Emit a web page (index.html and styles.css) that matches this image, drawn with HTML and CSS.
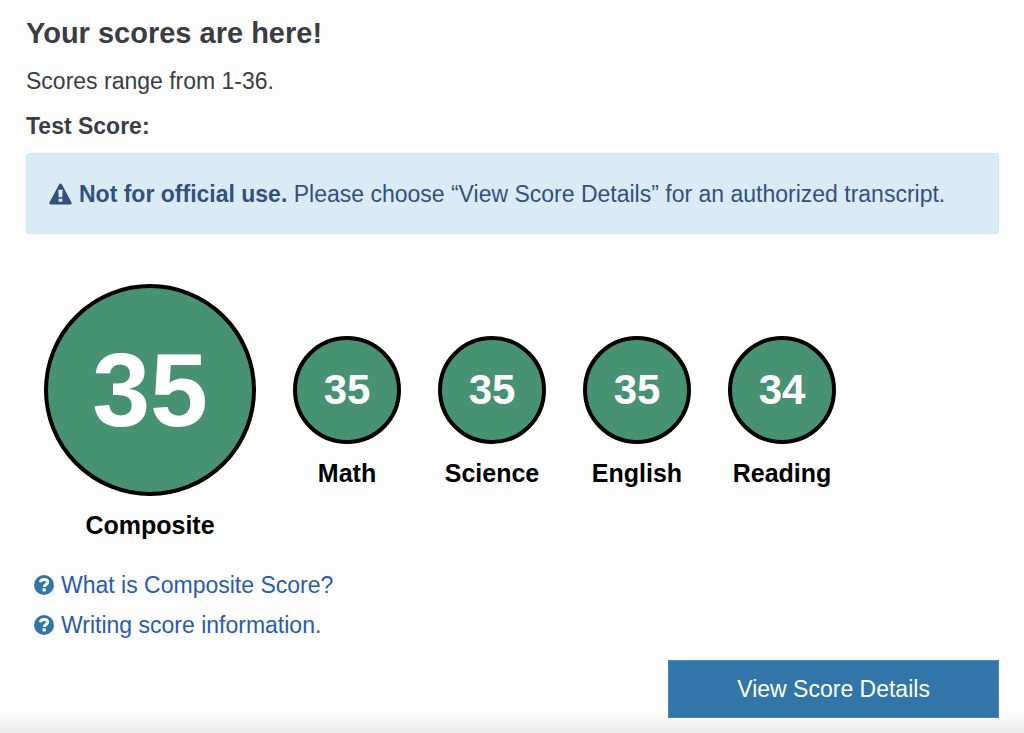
FILE: index.html
```html
<!DOCTYPE html>
<html lang="en">
<head>
    <meta charset="UTF-8">
    <meta name="viewport" content="width=device-width, initial-scale=1.0">
    <title>Your scores</title>
    <link rel="stylesheet" href="styles.css">
</head>
<body>
    <main class="container">
        <h1 class="title">Your scores are here!</h1>
        <p class="range">Scores range from 1-36.</p>
        <h2 class="subtitle">Test Score:</h2>
        <div class="alert">
            <svg class="icon-warning" viewBox="0 0 24 22" aria-hidden="true">
                <path fill="currentColor" fill-rule="evenodd" d="M12 0q1 0 1.500 1L23.700 20q.3 2-1.700 2H2Q0 22 .3 20L10.500 1Q11 0 12 0ZM9.700 6.500l.5 8h3.600l.5-8ZM10 16v3.200h4V16Z"/>
            </svg>
            <p><strong>Not for official use.</strong> Please choose “View Score Details” for an authorized transcript.</p>
        </div>
        <div class="scores">
            <div class="score composite">
                <div class="circle">35</div>
                <div class="label">Composite</div>
            </div>
            <div class="score">
                <div class="circle">35</div>
                <div class="label">Math</div>
            </div>
            <div class="score">
                <div class="circle">35</div>
                <div class="label">Science</div>
            </div>
            <div class="score">
                <div class="circle">35</div>
                <div class="label">English</div>
            </div>
            <div class="score">
                <div class="circle">34</div>
                <div class="label">Reading</div>
            </div>
        </div>
        <div class="links">
            <a href="#composite">
                <svg class="icon-help" viewBox="0 0 20 20" aria-hidden="true">
                    <circle cx="10" cy="10" r="10" fill="currentColor"/>
                    <path d="M6.200 7.200C6.800 5 8.200 4.400 10 4.400c2.200 0 3.700 1 3.700 2.800C13.700 9.600 10.200 9.300 10.200 12" fill="none" stroke="#fff" stroke-width="3"/>
                    <path d="M8.600 13.400h3.200v3H8.600z" fill="#fff"/>
                </svg>
                What is Composite Score?
            </a>
            <a href="#writing">
                <svg class="icon-help" viewBox="0 0 20 20" aria-hidden="true">
                    <circle cx="10" cy="10" r="10" fill="currentColor"/>
                    <path d="M6.200 7.200C6.800 5 8.200 4.400 10 4.400c2.200 0 3.700 1 3.700 2.800C13.700 9.600 10.200 9.300 10.200 12" fill="none" stroke="#fff" stroke-width="3"/>
                    <path d="M8.600 13.400h3.200v3H8.600z" fill="#fff"/>
                </svg>
                Writing score information.
            </a>
        </div>
        <button class="btn" type="button">View Score Details</button>
    </main>
</body>
</html>
```

FILE: styles.css
```css
*{
    padding: 0;
    margin: 0;
    box-sizing: border-box;
}
body{
    min-height: 100vh;
    font-family: "Liberation Sans", Arial, sans-serif;
    font-size: 23px;
    line-height: 28px;
    color: #3b3d44;
    background: linear-gradient(to top, #ebebeb, #fafafa 16px, #fdfdfd 18px) #fdfdfd;
}
.container{
    display: flex;
    flex-direction: column;
    padding: 17px 25px 15px 26px;
}
.title{
    font-size: 29px;
    line-height: 32px;
}
.range{
    margin-top: 18px;
}
.subtitle{
    margin-top: 17px;
    font-size: 23px;
}
.alert{
    display: flex;
    align-items: center;
    gap: 7px;
    margin-top: 13px;
    padding: 26px 22px 25px;
    border: 1px solid #c9e9f0;
    border-radius: 3px;
    background-color: #dbebf6;
    color: #31517e;
}
.icon-warning{
    flex: none;
    width: 23px;
    height: 22px;
}
.scores{
    display: flex;
    gap: 37px;
    margin-top: 50px;
    padding-left: 18px;
}
.score{
    width: 108px;
    margin-top: 52px;
    text-align: center;
    color: #000;
}
.circle{
    display: flex;
    align-items: center;
    justify-content: center;
    height: 108px;
    border: 4px solid #000;
    border-radius: 50%;
    background-color: #489274;
    color: #fff;
    font-size: 42px;
    font-weight: bold;
}
.label{
    margin-top: 15px;
    font-size: 25px;
    font-weight: bold;
}
.composite{
    width: 212px;
    margin-top: 0;
}
.composite .circle{
    height: 212px;
    font-size: 104px;
}
.links{
    display: flex;
    flex-direction: column;
    align-items: flex-start;
    gap: 12px;
    margin-top: 32px;
    padding-left: 8px;
}
.links a{
    display: flex;
    align-items: center;
    gap: 7px;
    color: #2a5caa;
    text-decoration: none;
}
.icon-help{
    width: 20px;
    height: 20px;
    color: #3276a8;
}
.btn{
    align-self: flex-end;
    width: 34%;
    height: 58px;
    margin-top: 21px;
    border: 1px solid #4a86b5;
    background-color: #3275a8;
    color: #fff;
    font-family: inherit;
    font-size: 23px;
    cursor: pointer;
}
```
